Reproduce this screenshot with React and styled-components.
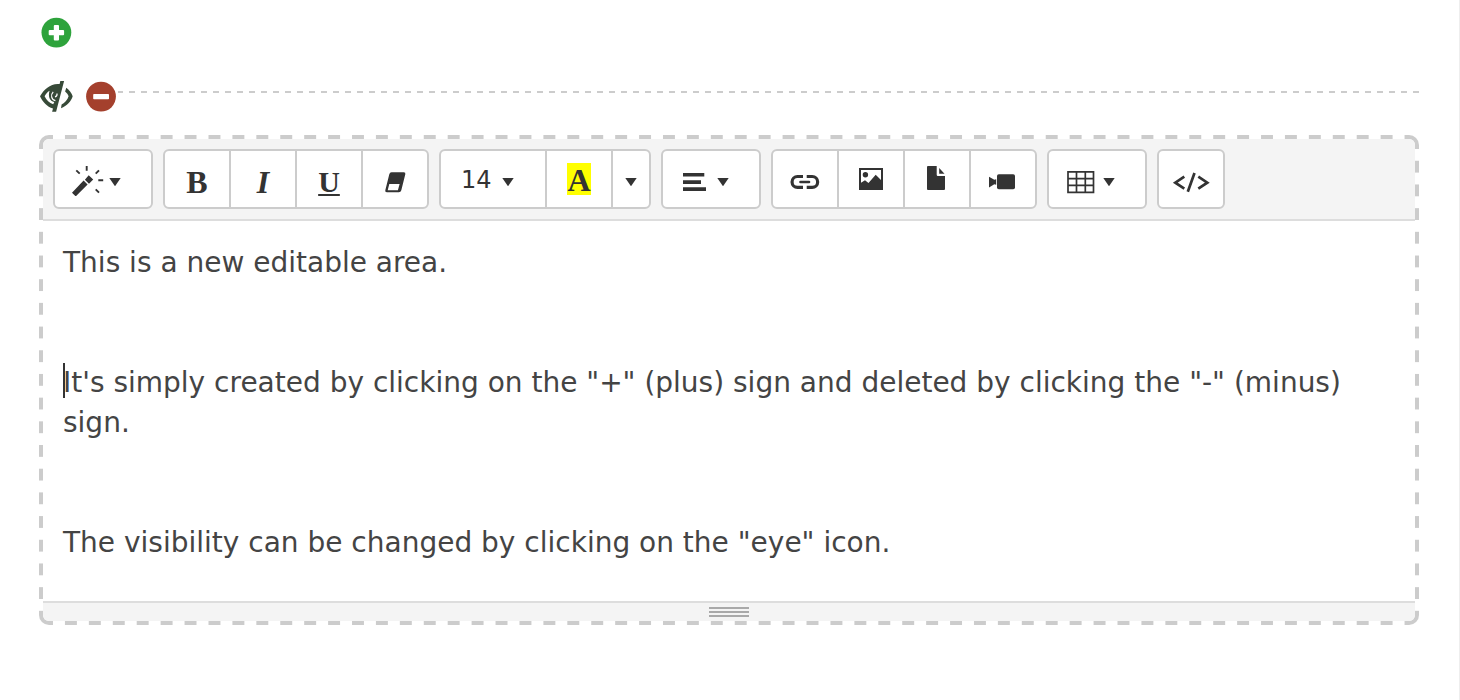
import React from "react";
import styled, { createGlobalStyle, css } from "styled-components";

const INK = "#333333";
const LINE = "#cccccc";
const PANEL = "#f4f4f4";

const GlobalStyle = createGlobalStyle`
  *, *::before, *::after { box-sizing: border-box; }
  body {
    margin: 0;
    background: #fff;
    color: #444;
    font-family: "DejaVu Sans", Verdana, sans-serif;
  }
`;

const Page = styled.main`
  min-height: 100vh;
  padding: 16px 40px 40px 39px;
  border-right: 1px solid #eee;
`;

const IconButton = styled.button`
  display: block;
  flex: none;
  padding: 0;
  border: 0;
  background: none;
  cursor: pointer;

  svg { display: block; }
`;

const SectionBar = styled.div`
  display: flex;
  align-items: flex-start;
  margin: 30px 0 21px;
`;

const RemoveButton = styled(IconButton)`
  margin-left: 11px;
`;

const DashedRule = styled.div`
  flex: 1;
  height: 2px;
  margin-top: 11px;
  background: repeating-linear-gradient(270deg, ${LINE} 0 6px, transparent 6px 12px);
`;

const dashX = `linear-gradient(90deg, ${LINE} 25%, transparent 25% 75%, ${LINE} 75%)`;
const dashY = `linear-gradient(${LINE} 25%, transparent 25% 75%, ${LINE} 75%)`;
const solid = `linear-gradient(${LINE}, ${LINE})`;

/* Long dashes on all four sides, joined by solid rounded corners. */
const Frame = styled.section`
  border: 8px solid transparent;
  border-radius: 10px;
  background:
    ${solid} left -8px top -8px / 14px 14px no-repeat,
    ${solid} right -8px top -8px / 14px 14px no-repeat,
    ${solid} left -8px bottom -8px / 14px 14px no-repeat,
    ${solid} right -8px bottom -8px / 14px 14px no-repeat,
    ${dashX} left 0 top -8px / 24px 4px round no-repeat,
    ${dashX} left 0 bottom -8px / 24px 4px round no-repeat,
    ${dashY} left -8px top 0 / 4px 24px no-repeat round,
    ${dashY} right -8px top 0 / 4px 24px no-repeat round;
  background-origin: padding-box;
  background-clip: border-box;
`;

const Editor = styled.div`
  margin: -4px;
  overflow: hidden;
  border-radius: 6px;
  background: #fff;
`;

const Toolbar = styled.div`
  display: flex;
  flex-wrap: wrap;
  gap: 10px;
  padding: 10px;
  border-bottom: 2px solid #ddd;
  background: ${PANEL};
`;

const Group = styled.div`
  display: flex;
`;

const widths = { cell: 68, caret: 40, menu: 100, size: 108 };

const Tool = styled.button`
  display: flex;
  align-items: center;
  justify-content: center;
  gap: 4px;
  width: ${(p) => widths[p.$kind || "cell"]}px;
  height: 60px;
  padding: 0;
  border: 2px solid ${LINE};
  background: #fff;
  color: ${INK};
  font-family: inherit;
  font-size: 24px;
  cursor: pointer;

  ${(p) => p.$kind === "menu" && css`
    justify-content: flex-start;
    padding: 0 16px;
  `}
  ${(p) => p.$kind === "size" && css`
    justify-content: flex-start;
    gap: 10px;
    padding: 0 20px;
  `}

  & + & { margin-left: -2px; }
  &:first-child { border-top-left-radius: 6px; border-bottom-left-radius: 6px; }
  &:last-child { border-top-right-radius: 6px; border-bottom-right-radius: 6px; }
  svg { display: block; flex: none; }
`;

const Glyph = styled.span`
  padding-top: 6px;
  font: bold 32px/32px "Liberation Serif", "Times New Roman", serif;
  font-style: ${(p) => (p.$italic ? "italic" : "normal")};
`;

const Underlined = styled(Glyph)`
  font-size: 30px;
  text-decoration: underline 2px;
  text-underline-offset: 2px;
`;

const Highlight = styled(Glyph)`
  padding-top: 2px;
  line-height: 30px;
  background: #ff0;
`;

const SizeValue = styled.span`
  padding-top: 2px;
  line-height: 28px;
`;

const Content = styled.div`
  padding: 22px 20px 18px;
  outline: none;
  font-size: 28px;
  line-height: 40px;
`;

const Paragraph = styled.p`
  position: relative;
  min-height: 40px;
  margin: 0 0 20px;
`;

const TextCursor = styled.span`
  position: absolute;
  top: 0;
  left: 0;
  width: 2px;
  height: 35px;
  background: ${INK};
`;

const ResizeBar = styled.div`
  display: flex;
  flex-direction: column;
  align-items: center;
  gap: 2px;
  height: 20px;
  padding-top: 4px;
  border-top: 2px solid #ddd;
  background: ${PANEL};
  cursor: ns-resize;
`;

const GripLine = styled.span`
  width: 40px;
  height: 2px;
  background: #a9a9a9;
`;

const Svg = ({ w = 34, x = 0, y = 162, children }) => (
  <svg width={w} height="34" viewBox={`${x} ${y} ${w} 34`} fill={INK} aria-hidden="true">
    {children}
  </svg>
);

const Caret = () => (
  <Svg w={12} y={0}>
    <path d="M0.3 16h11.4L6 24.3z" />
  </Svg>
);

const Wand = () => (
  <Svg x={71}>
    <path d="M72 192.700l3.700 3.700 11.900-11.900-4-4zM88.700 175.200l4.500 4.200-4.200 4.300-4.100-4z" />
    <path
      d="M86.700 166v4.700M76.300 170.300l3.400 3.400M99 170.300l-3.300 3.400M98.300 180.300h4.900M95.700 189.300l3.300 3.400"
      stroke={INK}
      strokeWidth="1.900"
    />
  </Svg>
);

const Eraser = () => (
  <Svg x={378}>
    <path
      fillRule="evenodd"
      d="M391.500 172.300h12.300q2 0 1.500 2l-4 16q-.5 1.900-2.500 1.900h-12q-2 0-1.500-2l4-16q.5-1.900 2.200-1.900zM389.300 184l-1.600 6.300h10.200l1.700-6.300z"
    />
  </Svg>
);

const AlignLeft = () => (
  <Svg x={679}>
    <path d="M683 173h21.300v3.600H683zM683 180.300h18v3.600h-18zM683 187.300h23v3.600h-23z" />
  </Svg>
);

const Link = () => (
  <Svg x={788}>
    <path
      d="M803 176.500h-5.500a5.400 5.400 0 0 0 0 10.900h5.500M806.700 176.500h5.500a5.400 5.400 0 0 1 0 10.900h-5.500"
      fill="none"
      stroke={INK}
      strokeWidth="3.200"
    />
    <path d="M800.500 182h8.500" stroke={INK} strokeWidth="2.600" strokeLinecap="round" />
  </Svg>
);

const Picture = () => (
  <Svg x={854}>
    <path
      fillRule="evenodd"
      d="M859 168h24v22h-24zM861 170v12.700l4-2.400 3.500 2.700 7.200-8.300 5.300 5.300v-10z"
    />
    <circle cx="865.400" cy="174.800" r="2.700" />
  </Svg>
);

const File = () => (
  <Svg x={920}>
    <path d="M928 166h8.700v8.800q0 1.200 1.200 1.200h7.100v13q0 1-1 1h-16q-1 0-1-1v-22q0-1 1-1zM939.200 168l5.300 5.700h-5.300z" />
  </Svg>
);

const Video = () => (
  <Svg x={986}>
    <rect x="997" y="174.300" width="18" height="15" rx="1.800" />
    <path d="M989 176.700l5.300 3.100 1.900-.5v5.400l-1.900-.5-5.300 3.200z" />
  </Svg>
);

const Table = () => (
  <Svg x={1065}>
    <path
      d="M1068 171.800h25.500v20.500h-25.500zM1076.500 171v21M1085.300 171v21M1068 178.600h25.500M1068 185.400h25.500"
      fill="none"
      stroke={INK}
      strokeWidth="1.700"
    />
  </Svg>
);

const Code = () => (
  <Svg w={40} x={1171}>
    <path
      d="M1184.300 176.700l-9 6 9 6M1194.500 173l-6.700 18.700M1198.300 176.700l9 6-9 6"
      fill="none"
      stroke={INK}
      strokeWidth="2.700"
    />
  </Svg>
);

const PlusIcon = () => (
  <Svg y={0}>
    <circle cx="17.400" cy="16.600" r="14.900" fill="#2ea33c" />
    <g fill="#fff">
      <rect x="14.800" y="9" width="5.200" height="15.400" rx="1" />
      <rect x="9.700" y="14.100" width="15.400" height="5.200" rx="1" />
    </g>
  </Svg>
);

const MinusIcon = () => (
  <Svg y={0}>
    <circle cx="17" cy="16.600" r="14.900" fill="#a4402d" />
    <rect x="9.200" y="14" width="15.800" height="5.200" rx=".8" fill="#fff" />
  </Svg>
);

const EyeOffIcon = () => (
  <Svg y={0}>
    <g fill="#374a38">
      <path
        fillRule="evenodd"
        d="M21.300 1h3.800l-8 30.700h-4l.9-3.300C8 27.200 3.500 21.500 1 16.300 5 9 12 3 20.600 4zM5.600 16.300C7.500 20 10.300 23 14.200 24.300l1.100-2.300C10.800 21 8.700 16.500 10.600 10.700 8.300 12 6.700 14 5.600 16.300z"
      />
      <path d="M27.300 7.700c2.900 2 5.200 5 6.400 8.600-1.700 5.200-5.600 9.700-11.700 11.900l.6-3.600c3.300-1.700 6-4.800 7-8.300-.6-1.700-1.600-3.200-3.500-4.800z" />
    </g>
    <path
      d="M14.200 11.800c-3 3.200-1.700 8.200 2.200 8.900M18 13.500c.3 1.700-.5 2.900-2 3.300"
      fill="none"
      stroke="#fff"
      strokeWidth="1.200"
    />
  </Svg>
);

export default function App() {
  return (
    <>
      <GlobalStyle />
      <Page>
        <IconButton type="button" aria-label="Add editable area">
          <PlusIcon />
        </IconButton>

        <SectionBar>
          <IconButton type="button" aria-label="Change visibility">
            <EyeOffIcon />
          </IconButton>
          <RemoveButton type="button" aria-label="Delete editable area">
            <MinusIcon />
          </RemoveButton>
          <DashedRule />
        </SectionBar>

        <Frame>
          <Editor>
            <Toolbar role="toolbar" aria-label="Formatting">
              <Group>
                <Tool $kind="menu" aria-label="Style"><Wand /><Caret /></Tool>
              </Group>
              <Group>
                <Tool aria-label="Bold"><Glyph>B</Glyph></Tool>
                <Tool aria-label="Italic"><Glyph $italic>I</Glyph></Tool>
                <Tool aria-label="Underline"><Underlined>U</Underlined></Tool>
                <Tool aria-label="Remove formatting"><Eraser /></Tool>
              </Group>
              <Group>
                <Tool $kind="size" aria-label="Font size"><SizeValue>14</SizeValue><Caret /></Tool>
                <Tool aria-label="Text color"><Highlight>A</Highlight></Tool>
                <Tool $kind="caret" aria-label="More colors"><Caret /></Tool>
              </Group>
              <Group>
                <Tool $kind="menu" aria-label="Paragraph"><AlignLeft /><Caret /></Tool>
              </Group>
              <Group>
                <Tool aria-label="Link"><Link /></Tool>
                <Tool aria-label="Picture"><Picture /></Tool>
                <Tool aria-label="File"><File /></Tool>
                <Tool aria-label="Video"><Video /></Tool>
              </Group>
              <Group>
                <Tool $kind="menu" aria-label="Table"><Table /><Caret /></Tool>
              </Group>
              <Group>
                <Tool aria-label="Code view"><Code /></Tool>
              </Group>
            </Toolbar>

            <Content
              contentEditable
              suppressContentEditableWarning
              spellCheck={false}
              role="textbox"
              aria-multiline="true"
              aria-label="Editable area"
            >
              <Paragraph>This is a new editable area.</Paragraph>
              <Paragraph />
              <Paragraph>
                <TextCursor />
                It's simply created by clicking on the "+" (plus) sign and deleted by clicking the "-" (minus) sign.
              </Paragraph>
              <Paragraph />
              <Paragraph>The visibility can be changed by clicking on the "eye" icon.</Paragraph>
            </Content>

            <ResizeBar>
              <GripLine />
              <GripLine />
              <GripLine />
            </ResizeBar>
          </Editor>
        </Frame>
      </Page>
    </>
  );
}
